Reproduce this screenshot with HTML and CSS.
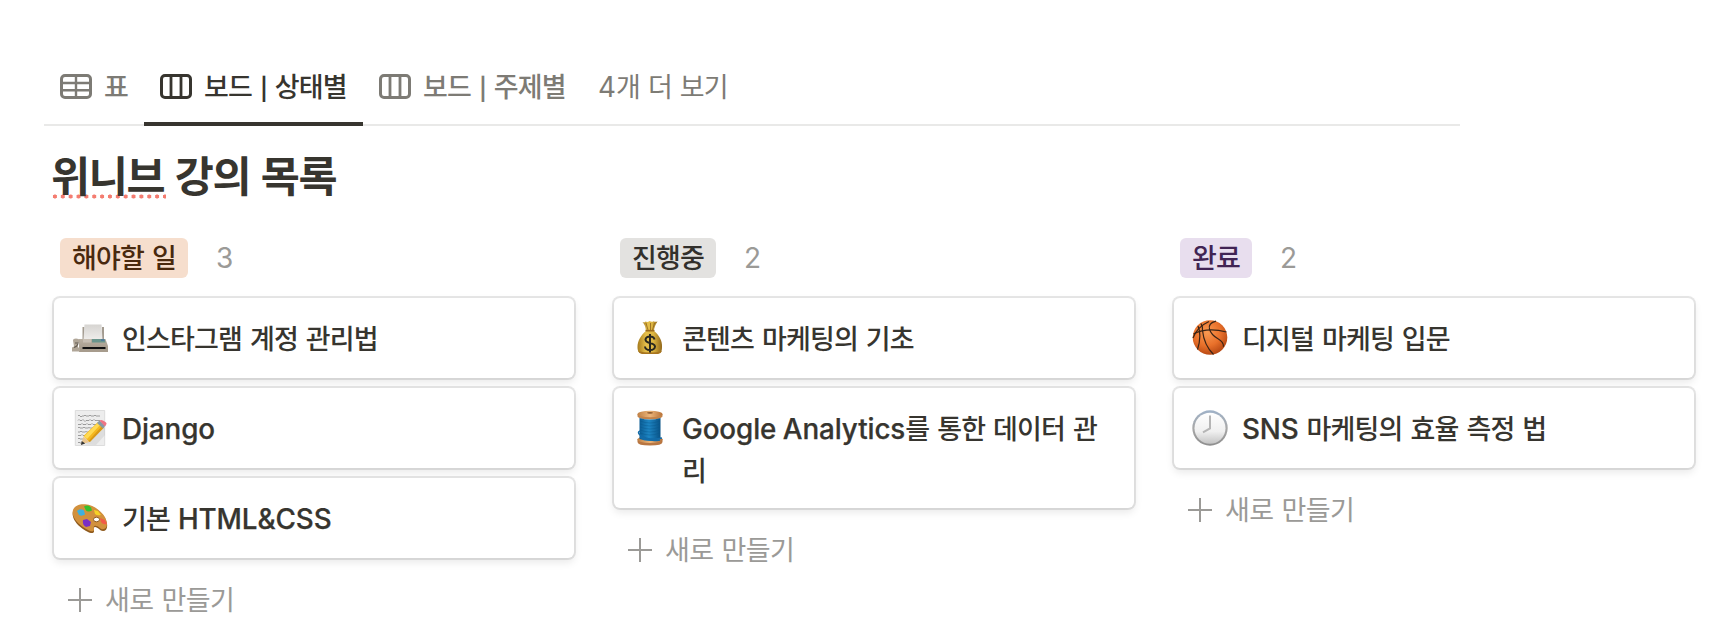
FILE: index.html
```html
<!DOCTYPE html>
<html lang="ko">
<head>
<meta charset="utf-8">
<title>위니브 강의 목록</title>
<link rel="stylesheet" href="styles.css">
</head>
<body>
<svg class="defs" width="0" height="0">
  <defs>
    <linearGradient id="gold" x1="0" x2="1"><stop offset="0" stop-color="#a57a1c"/><stop offset=".35" stop-color="#e6c04c"/><stop offset=".65" stop-color="#dcb440"/><stop offset="1" stop-color="#91671a"/></linearGradient>
    <linearGradient id="wood" x1="0" x2="1"><stop offset="0" stop-color="#c08145"/><stop offset=".5" stop-color="#ecb57a"/><stop offset="1" stop-color="#b87238"/></linearGradient>
    <linearGradient id="thread" x1="0" x2="1"><stop offset="0" stop-color="#0a5c94"/><stop offset=".45" stop-color="#1e86c4"/><stop offset="1" stop-color="#085286"/></linearGradient>
    <radialGradient id="ball" cx=".42" cy=".35" r=".65"><stop offset="0" stop-color="#f99a52"/><stop offset=".6" stop-color="#e8702a"/><stop offset="1" stop-color="#b94a14"/></radialGradient>
    <linearGradient id="rim" x1="0" y1="0" x2="0" y2="1"><stop offset="0" stop-color="#9fb2c8"/><stop offset=".5" stop-color="#a8a8a8"/><stop offset="1" stop-color="#8e8e8e"/></linearGradient>
    <linearGradient id="face" x1="0" y1="0" x2="0" y2="1"><stop offset="0" stop-color="#ffffff"/><stop offset=".6" stop-color="#f0f0f0"/><stop offset="1" stop-color="#c4c4c4"/></linearGradient>
    <linearGradient id="sheet" x1="0" y1="0" x2="0" y2="1"><stop offset="0" stop-color="#d6d4d1"/><stop offset="1" stop-color="#efedeb"/></linearGradient>
    <linearGradient id="body" x1="0" y1="0" x2="0" y2="1"><stop offset="0" stop-color="#b9afa1"/><stop offset="1" stop-color="#a39888"/></linearGradient>
  </defs>
</svg>
<nav class="tabs">
  <div class="tab tab-table">
    <svg class="view-icon" viewBox="0 0 32 25" fill="none" stroke="currentColor"><rect x="1.500" y="1.500" width="29" height="22" rx="3.500" stroke-width="3"/><path d="M1.500 9h29M1.500 16.200h29M16 1.500v22" stroke-width="2.400"/></svg>
    <span>표</span>
  </div>
  <div class="tab tab-status active">
    <svg class="view-icon" viewBox="0 0 32 25" fill="none" stroke="currentColor"><rect x="1.500" y="1.500" width="29" height="22" rx="3.500" stroke-width="3"/><path d="M11 1.500v22M21 1.500v22" stroke-width="2.800"/></svg>
    <span>보드 <span class="bar">|</span> 상태별</span>
  </div>
  <div class="tab tab-topic">
    <svg class="view-icon" viewBox="0 0 32 25" fill="none" stroke="currentColor"><rect x="1.500" y="1.500" width="29" height="22" rx="3.500" stroke-width="3"/><path d="M11 1.500v22M21 1.500v22" stroke-width="2.800"/></svg>
    <span>보드 <span class="bar">|</span> 주제별</span>
  </div>
  <div class="tab tab-more"><span><span class="digit">4</span>개 더 보기</span></div>
</nav>
<h1 class="title"><span class="misspelled">위니브</span> 강의 목록</h1>
<main class="board">
  <section class="column">
    <header class="column-head"><span class="tag orange">해야할 일</span><span class="count">3</span></header>
    <article class="card">
      <svg class="emoji" viewBox="0 0 36 36"><path d="M10.500 7h2v13h-2zM30 7h2v13h-2z" fill="#a39b90"/><path d="M12.500 4.500h17l1 15H11.500z" fill="url(#sheet)"/><path d="M7 19h26.500l2.500 7v5H7z" fill="url(#body)"/><path d="M7 29.500h29V32H7z" fill="#a79c8d"/><path d="M11 19h8v3.500h-8z" fill="#c7beb2"/><path d="M20 19h12.500l1 3.500H20z" fill="#6a958c"/><path d="M29 19.300h3.500v1.500H29z" fill="#4a73a0"/><path d="M10.500 27h23v2h-23z" fill="#111"/><path d="M1 20.500q0-2 3-2t4 2v2H6v5h2v4H0v-4l2-1z" fill="#b0a698"/><path d="M3 23h4M2 27.500q3-1 4-3.500" fill="none" stroke="#625a51" stroke-width="1.100"/></svg>
      <span class="card-title">인스타그램 계정 관리법</span>
    </article>
    <article class="card">
      <svg class="emoji" viewBox="0 0 36 36"><path d="M3.300.500h29.400v35H3.300z" fill="#ededed" stroke="#d3d3d3" stroke-width=".7"/><g fill="none" stroke="#888" stroke-width=".8"><path d="M6 6q1-2 2 0t2 0h2q1-2 2 0h3q1-2 2 0h3q1-2 2 0h4"/><path d="M6 10.500q1-2 2 0h2q1-2 2 0t2 0h3q1-2 2 0h2q1-2 2 0h5"/><path d="M6 14.500h3q1-2 2 0h3q1-2 2 0h3q1-2 2 0h4"/><path d="M6 18q1-2 2 0h3q1-2 2 0h3q1-1 2 0h3"/><path d="M6 22h2q1-2 2 0h3q1-1 2 0h2M6 25.500h3q1-2 2 0h3M6 29q1-2 2 0h4M6 33q1-2 2 0h3"/></g><path d="M13 34.500l11 .5 9-10v-8z" fill="#bbb" opacity=".3"/><path d="M11.500 26L26 12l6 5.500L17 32z" fill="#f5b81f"/><path d="M12 26.500L26 12.500l2.500 2L15 29z" fill="#ffda54"/><path d="M16 31.500L30 16l2 1.500L18 32z" fill="#d99a18"/><path d="M11.500 26.500l6 5.500-8.500 2.500z" fill="#e9c590"/><path d="M9.700 31l3.500 2.500L9 35z" fill="#333"/><path d="M25 13l2.500-2.500 6 5-2.500 3z" fill="#8799a6"/><path d="M27.500 10.500q1.500-1 4 .2 3.500 1.800 3 3.300L33 16.500z" fill="#ef7484"/></svg>
      <span class="card-title"><span class="latin">Django</span></span>
    </article>
    <article class="card">
      <svg class="emoji" viewBox="0 0 36 36"><path d="M.7 15C0 8 6 4.500 13 5c8 .6 16 6 20 13 4 8 2 13-2 13-3 0-5-4-8-4-3 .5 1 5-2.500 6C17 34 1.800 25 .7 15z" fill="#8f5a1d"/><path d="M.7 13.500C0 7 6 3.800 13 4.300c8 .6 16 6 20 13 3.500 7 2 12-2 12-3 0-5-4-8-3.500-3 .5 1 5-2.500 5.500C17 31.800 1.800 23 .7 13.500z" fill="#d2913d"/><ellipse cx="24.500" cy="19.500" rx="3" ry="2.300" fill="#fff" stroke="#8f5a1d"/><path d="M5 11q3-3 7-.5l1 4q-3 2-6 .500z" fill="#3db0df"/><path d="M12 6.500q4-2.500 7 1l1 3q-4 2-6 0z" fill="#36c02b"/><path d="M22 10l4 1 3 4q-4 1-6-1z" fill="#f6d224"/><path d="M28 18l5 2 2 4q-4 1-6-2z" fill="#f15a49"/><path d="M11 20l4-1 4 3-1 4-4 1q-4-2-3-7z" fill="#7a2fc4"/></svg>
      <span class="card-title">기본 <span class="latin">HTML&amp;CSS</span></span>
    </article>
    <div class="add"><svg class="plus" viewBox="0 0 24 24"><path d="M12 0v24M0 12h24" stroke="currentColor" stroke-width="2"/></svg><span>새로 만들기</span></div>
  </section>
  <section class="column">
    <header class="column-head"><span class="tag gray">진행중</span><span class="count">2</span></header>
    <article class="card">
      <svg class="emoji" viewBox="0 0 36 36"><path d="M10.500 2q2 1 3-.5 2 1 4-.5 2 1.500 4 .3 2 1 4 .2-3.500 5-3.500 9.500h-8q-.5-6-3.500-9z" fill="url(#gold)"/><path d="M14 3l2 7M18.500 3v7M22.500 3l-2 7" stroke="#8e641d" stroke-width=".8"/><path d="M14 11h8c5 4 8.500 10 8 16 0 4.500-1 6-4 6.500H10c-3-.5-4.500-2-4.500-6.500C5.500 21 9 15 14 11z" fill="url(#gold)"/><path d="M6 31q12 3 24 0-1 2.500-4 3H10q-3-.5-4-3z" fill="#a8751f"/><path d="M13.500 10.700h9" stroke="#9b6a1c" stroke-width="1.600"/><path d="M22.500 19.500q-.5-3-4.500-3t-4.500 3q0 2.500 4.500 3.500t5 3.500q-.3 3.500-5 3.500t-5-3.500M18 14v18.500" fill="none" stroke="#29271f" stroke-width="2"/></svg>
      <span class="card-title">콘텐츠 마케팅의 기초</span>
    </article>
    <article class="card">
      <svg class="emoji" viewBox="0 0 36 36"><path d="M5.500 29v3q0 3.500 12.500 3.500T30.500 32v-3z" fill="#b87642"/><ellipse cx="18" cy="29.500" rx="12.500" ry="3.500" fill="url(#wood)"/><path d="M5.500 4v2.500Q7 9.500 18 9.500t12.500-3V4z" fill="#c3844b"/><path d="M7.500 8q10.500 3 21 0v21q-10.500 4-21 0z" fill="url(#thread)"/><g fill="none" stroke="#07568c" stroke-width=".7" opacity=".6"><path d="M8 11q10 4 20 0M8 14q10 4 20 0M8 17q10 4 20 0M8 20q10 4 20 0M8 23q10 4 20 0"/></g><path d="M8 21q-3 1 0 4 9 6 22 3M8 27q10 5 20 3" fill="none" stroke="#126ba8" stroke-width="1.500"/><ellipse cx="18" cy="4" rx="12.500" ry="3.300" fill="url(#wood)"/><ellipse cx="18" cy="2.800" rx="3" ry=".9" fill="#8f5b30"/></svg>
      <span class="card-title"><span class="latin">Google Analytics</span>를 통한 데이터 관리</span>
    </article>
    <div class="add"><svg class="plus" viewBox="0 0 24 24"><path d="M12 0v24M0 12h24" stroke="currentColor" stroke-width="2"/></svg><span>새로 만들기</span></div>
  </section>
  <section class="column">
    <header class="column-head"><span class="tag purple">완료</span><span class="count">2</span></header>
    <article class="card">
      <svg class="emoji" viewBox="0 0 36 36"><circle cx="18" cy="17.500" r="17.300" fill="url(#ball)"/><g fill="none" stroke="#3a2416" stroke-width="1.200"><path d="M1.500 14Q15 7 34.500 12"/><path d="M6 6q4 9-.5 23.500"/><path d="M9 3.500q2 3.500 1.500 7M10.500 10.500Q12 25 21.500 34.500"/><path d="M24 1.200q-8 2-6.500 8 2 6 8.500 9.500 6 3.500 5.500 8"/><path d="M1 18Q5 7 17 1.500"/></g></svg>
      <span class="card-title">디지털 마케팅 입문</span>
    </article>
    <article class="card">
      <svg class="emoji" viewBox="0 0 36 36"><circle cx="18" cy="18" r="17.700" fill="url(#rim)"/><circle cx="18" cy="18.300" r="15.500" fill="url(#face)"/><path d="M18 5.500v12.800l-7 4" fill="none" stroke="#b5b5b5" stroke-width="2"/></svg>
      <span class="card-title"><span class="latin">SNS</span> 마케팅의 효율 측정 법</span>
    </article>
    <div class="add"><svg class="plus" viewBox="0 0 24 24"><path d="M12 0v24M0 12h24" stroke="currentColor" stroke-width="2"/></svg><span>새로 만들기</span></div>
  </section>
</main>
</body>
</html>
```

FILE: styles.css
```css
* { box-sizing: border-box; }
body {
  margin: 0;
  padding: 46px 0 0 44px;
  height: 644px;
  overflow: hidden;
  background: #fff;
  color: #37352f;
  font-family: "Noto Sans CJK KR", sans-serif;
  font-size: 27px;
  font-weight: 500;
  letter-spacing: -0.84px;
  word-spacing: 1.2px;
  line-height: 42px;
}
.defs { display: block; position: absolute; }
.latin, .digit {
  font-family: Inter, sans-serif;
  font-size: 27.8px;
  line-height: 1;
  letter-spacing: 0;
  word-spacing: 0;
}
.latin { letter-spacing: -0.1px; word-spacing: -0.8px; -webkit-text-stroke: 0.25px currentColor; }
.tabs {
  display: flex;
  width: 1416px;
  height: 80px;
  box-shadow: inset 0 -2px #e9e9e8;
  color: #7d7b75;
}
.tab {
  display: flex;
  align-items: center;
  gap: 12px;
  height: 80px;
  padding: 0 16px;
  white-space: nowrap;
}
.tab-table { width: 100px; }
.tab-status { width: 219px; }
.tab-topic { width: 220px; }
.tab-more { padding-left: 15px; font-weight: 400; }
.active { color: #37352f; box-shadow: inset 0 -4px #37352f; }
.bar {
  display: inline-block;
  width: 7px;
  font-family: Inter, sans-serif;
  font-size: 22px;
  font-weight: 600;
  line-height: 1;
  letter-spacing: 0;
  text-align: center;
}
.view-icon { width: 32px; height: 25px; flex: none; }
.title {
  margin: 18px 0 0 7px;
  height: 60px;
  font-size: 42.5px;
  font-weight: 700;
  line-height: 60px;
  letter-spacing: -1.35px;
  word-spacing: 0;
}
.misspelled {
  padding-right: 2px;
  margin-right: -2px;
  background: radial-gradient(circle, #f47c70 1.8px, transparent 2.3px) 0 calc(100% - 5px) / 7.87px 5px repeat-x;
}
.board {
  display: grid;
  grid-template-columns: repeat(3, 524px);
  gap: 36px;
  padding: 34px 0 0 8px;
}
.column { display: flex; flex-direction: column; }
.column-head {
  display: flex;
  align-items: center;
  gap: 28px;
  height: 40px;
  padding-left: 8px;
  margin-bottom: 20px;
}
.tag { height: 40px; padding: 0 12px; border-radius: 6px; line-height: 38px; white-space: nowrap; }
.orange { background: #f6decd; color: #49290e; }
.gray { background: #e3e2e0; color: #32302c; }
.purple { background: #e8deee; color: #412454; }
.count { font-family: Inter, sans-serif; font-size: 28px; font-weight: 400; color: #9b9a97; letter-spacing: 0; }
.card {
  display: flex;
  gap: 14px;
  min-height: 80px;
  margin: 0 2px 10px;
  padding: 19px 20px 17px 18px;
  border-radius: 6px;
  box-shadow: 0 0 0 2px rgba(15, 15, 15, .1), 0 4px 8px rgba(15, 15, 15, .1);
  background: #fff;
}
.emoji { width: 36px; height: 36px; margin-top: 3px; flex: none; }
.card-title { word-break: break-all; }
.add {
  display: flex;
  align-items: center;
  gap: 13px;
  height: 42px;
  margin-top: 11px;
  padding-left: 16px;
  color: #9b9a97;
  font-weight: 400;
  letter-spacing: -0.64px;
}
.add span { margin-top: -2px; }
.plus { width: 24px; height: 24px; }
```
